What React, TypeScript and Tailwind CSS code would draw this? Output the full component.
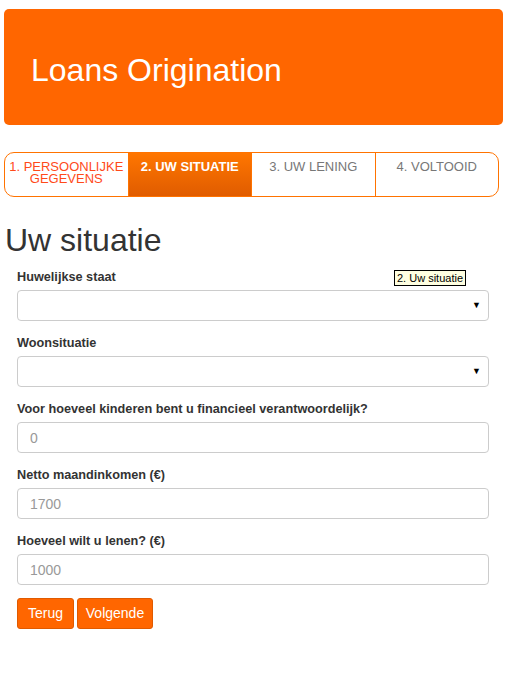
import React from "react";

const font = { fontFamily: '"Liberation Sans", Arial, sans-serif' };

const steps = [
  { label: "1. PERSOONLIJKE GEGEVENS", state: "done" },
  { label: "2. UW SITUATIE", state: "active" },
  { label: "3. UW LENING", state: "todo" },
  { label: "4. VOLTOOID", state: "todo" },
];

function Field({
  label,
  children,
}: {
  label: string;
  children: React.ReactNode;
}) {
  return (
    <div className="mb-[10px]">
      <label className="block text-[12.7px] font-bold leading-[20px] pt-[2px] mb-[3px] text-[#333]">
        {label}
      </label>
      {children}
    </div>
  );
}

function Select() {
  return (
    <div className="relative h-[31px] w-full rounded-[4px] border border-[#ccc] bg-white">
      <span className="absolute right-[7px] top-[10px] text-[9px] leading-none text-black">
        ▼
      </span>
    </div>
  );
}

function Input({ placeholder }: { placeholder: string }) {
  return (
    <input
      placeholder={placeholder}
      className="block h-[31px] w-full rounded-[4px] border border-[#ccc] bg-white px-[12px] text-[14px] text-[#555] placeholder:text-[#999] outline-none"
      style={font}
    />
  );
}

export default function App() {
  return (
    <div className="min-h-screen bg-white px-[4px] pt-[9px]" style={font}>
      <div className="w-[499px] h-[116px] rounded-[5px] bg-[#ff6600] flex items-center pl-[27px] pt-[6px]">
        <h1 className="text-[32px] leading-none text-white">Loans Origination</h1>
      </div>

      <div className="mt-[27px] w-[495px] h-[45px] flex rounded-[10px] border border-[#ff7300] overflow-hidden">
        {steps.map((s, i) => (
          <div
            key={s.label}
            className={
              "flex-1 px-[4px] pt-[8px] text-center text-[13px] leading-[12px] " +
              (i > 0 ? "border-l border-[#ff7300] " : "") +
              (s.state === "active"
                ? "bg-gradient-to-b from-[#ff7600] to-[#e05c00] text-white font-bold"
                : s.state === "done"
                ? "text-[#ff4a1a]"
                : "text-[#777]")
            }
          >
            {s.label}
          </div>
        ))}
      </div>

      <h2 className="mt-[26px] ml-[1px] text-[32px] leading-[35px] text-[#333]">
        Uw situatie
      </h2>

      <div className="relative mt-[7px] ml-[13px] w-[472px]">
        <div className="absolute left-[377px] top-[5px] border border-black bg-[#ffffe1] px-[2px] text-[11px] leading-[14px] text-black">
          2. Uw situatie
        </div>
        <Field label="Huwelijkse staat">
          <Select />
        </Field>
        <Field label="Woonsituatie">
          <Select />
        </Field>
        <Field label="Voor hoeveel kinderen bent u financieel verantwoordelijk?">
          <Input placeholder="0" />
        </Field>
        <Field label="Netto maandinkomen (€)">
          <Input placeholder="1700" />
        </Field>
        <Field label="Hoeveel wilt u lenen? (€)">
          <Input placeholder="1000" />
        </Field>

        <div className="mt-[13px] flex gap-[3px]">
          <button className="h-[31px] w-[57px] rounded-[3px] border border-[#e05a00] bg-[#ff6600] text-[14px] text-white">
            Terug
          </button>
          <button className="h-[31px] w-[76px] rounded-[3px] border border-[#e05a00] bg-[#ff6600] text-[14px] text-white">
            Volgende
          </button>
        </div>
      </div>
    </div>
  );
}
